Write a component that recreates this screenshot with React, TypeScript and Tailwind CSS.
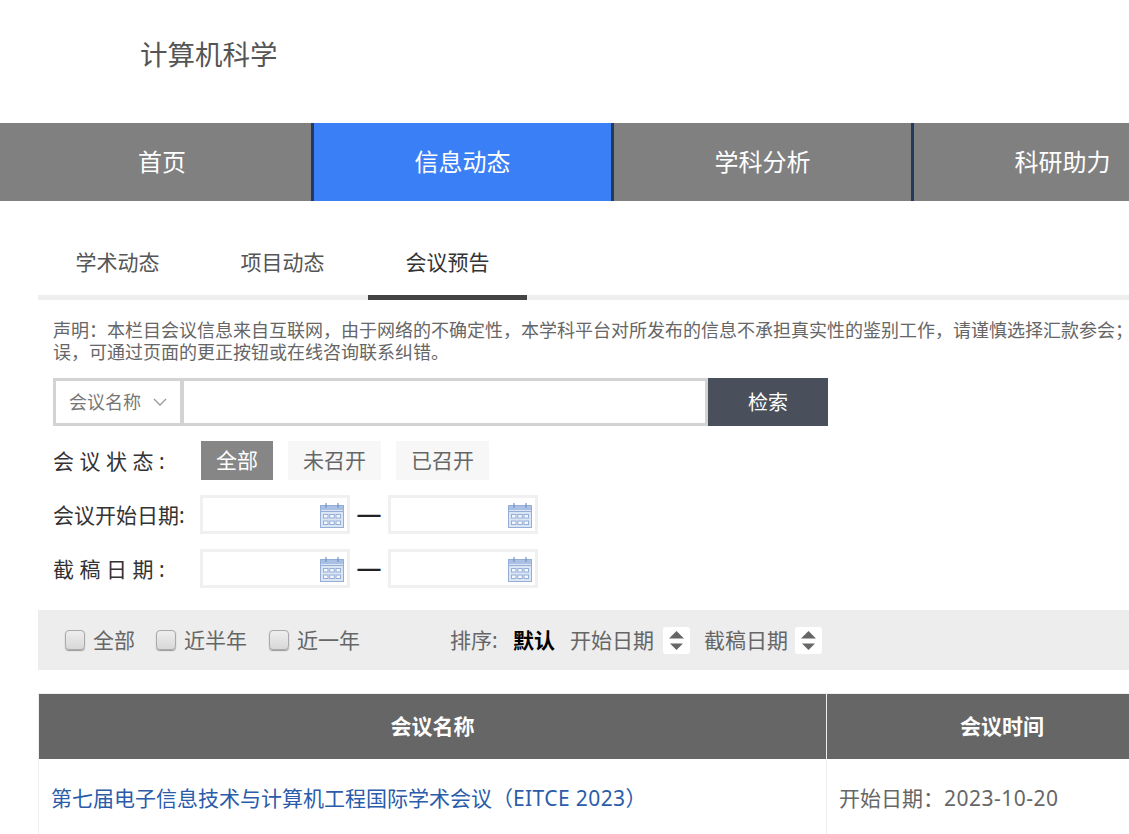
function Cal() {
  return (
    <svg width="24" height="26" viewBox="0 0 24 26" className="shrink-0">
      <rect x="0.5" y="3.5" width="23" height="22" fill="#dbe5f3" stroke="#94aed8" />
      <rect x="1" y="4" width="22" height="4" fill="#a9c0e4" />
      <path d="M6 1v5M18 1v5" stroke="#7392c6" strokeWidth="1.2" />
      <path d="M1 9.5h22" stroke="#94aed8" />
      <g fill="#f4f7fb" stroke="#94aed8" strokeWidth="1">
        <rect x="3.5" y="12.5" width="4.5" height="3.5" />
        <rect x="9.8" y="12.5" width="4.5" height="3.5" />
        <rect x="16" y="12.5" width="4.5" height="3.5" />
        <rect x="3.5" y="19" width="4.5" height="3.5" />
        <rect x="9.8" y="19" width="4.5" height="3.5" />
        <rect x="16" y="19" width="4.5" height="3.5" />
      </g>
    </svg>
  );
}
function DateBox() {
  return (
    <div className="w-[150px] h-[39px] border-[3px] border-[#f0f0f0] bg-white flex items-center justify-end pr-[3px]">
      <Cal />
    </div>
  );
}
function SortBtn() {
  return (
    <span className="w-[27px] h-[27px] bg-white rounded-[3px] flex items-center justify-center">
      <svg width="17" height="21" viewBox="0 0 17 21">
        <path d="M8.5 1L16 8.5H1Z" fill="#666666" />
        <path d="M8.5 20L15 13.5H2Z" fill="#666666" />
      </svg>
    </span>
  );
}
function Check({ label, cls }: { label: string; cls: string }) {
  return (
    <div className={`flex items-center ${cls}`}>
      <span className="w-[20px] h-[20px] rounded-[4px] border border-[#a9a9a9] bg-gradient-to-b from-[#eeeeee] to-[#d8d8d8] shadow-[0_1px_1px_#999]" />
      <span className="ml-[8px] pt-[2px] text-[21px] text-[#666666]">{label}</span>
    </div>
  );
}
function NavItem({ label, active, cls }: { label: string; active?: boolean; cls: string }) {
  return (
    <div className={`h-full flex items-center justify-center text-[24px] text-white shrink-0 ${active ? "bg-[#3b7ff6]" : "bg-[#808080]"} ${cls}`}>
      {label}
    </div>
  );
}
function Dash() {
  return <span className="w-[38px] pb-[2px] text-center text-[25px] font-medium text-[#222222]">—</span>;
}
export default function App() {
  return (
    <div
      className="w-[1129px] h-[834px] overflow-hidden bg-white"
      style={{ fontFamily: '"Noto Sans","Noto Sans CJK SC",sans-serif' }}
    >
      <div className="h-[123px] flex items-center pl-[140px] pb-[14px] text-[27.5px] text-[#555555]">计算机科学</div>
      <div className="h-[78px] flex w-[1300px]">
        <NavItem label="首页" cls="w-[311px] pl-[13px]" />
        <div className="w-[3px] bg-[#223a5e]" />
        <NavItem label="信息动态" active cls="w-[297px]" />
        <div className="w-[3px] bg-[#223a5e]" />
        <NavItem label="学科分析" cls="w-[297px]" />
        <div className="w-[3px] bg-[#223a5e]" />
        <NavItem label="科研助力" cls="w-[297px]" />
      </div>
      <div className="pl-[38px] w-[1300px]">
        <div className="mt-[37px] h-[62px] flex gap-[6px] border-b-[5px] border-[#eeeeee] w-[1262px]">
          {["学术动态", "项目动态", "会议预告"].map((t, i) => (
            <div
              key={t}
              className={`w-[159px] h-[62px] flex items-center justify-center text-[21px] pb-[7px] border-b-[5px] ${i === 2 ? "border-[#444444] text-[#333333]" : "border-transparent text-[#555555]"}`}
            >
              {t}
            </div>
          ))}
        </div>
        <div className="pl-[15px]">
          <p className="mt-[19px] w-[1085px] text-[18px] leading-[22px] text-[#666666]">
            声明：本栏目会议信息来自互联网，由于网络的不确定性，本学科平台对所发布的信息不承担真实性的鉴别工作，请谨慎选择汇款参会；误，可通过页面的更正按钮或在线咨询联系纠错。
          </p>
          <div className="mt-[15px] flex h-[48px]">
            <div className="w-[129px] border-[3px] border-r-2 border-[#d3d3d3] flex items-center pl-[13px] text-[18px] text-[#777777]">
              会议名称
              <svg width="14" height="9" viewBox="0 0 14 9" className="ml-[12px]">
                <path d="M1 1l6 6 6-6" fill="none" stroke="#999999" strokeWidth="1.3" />
              </svg>
            </div>
            <div className="w-[526px] border-y-[3px] border-r-[3px] border-l-2 border-[#d3d3d3]" />
            <div className="w-[120px] pt-[2px] bg-[#4a505b] text-white text-[20px] flex items-center justify-center">检索</div>
          </div>
          <div className="mt-[15px] flex items-center h-[39px]">
            <span className="w-[148px] pt-[2px] text-[21px] tracking-[5.5px] text-[#333333]">会议状态:</span>
            <span className="h-[39px] px-[15px] flex items-center bg-[#868686] text-white text-[21px]">全部</span>
            <span className="ml-[15px] h-[39px] px-[15px] flex items-center bg-[#f7f7f7] text-[#666666] text-[21px]">未召开</span>
            <span className="ml-[15px] h-[39px] px-[15px] flex items-center bg-[#f7f7f7] text-[#666666] text-[21px]">已召开</span>
          </div>
          <div className="mt-[15px] flex items-center h-[39px]">
            <span className="w-[147px] pt-[2px] text-[21px] whitespace-nowrap text-[#333333]">会议开始日期:</span>
            <DateBox />
            <Dash />
            <DateBox />
          </div>
          <div className="mt-[15px] flex items-center h-[39px]">
            <span className="w-[147px] pt-[2px] text-[21px] tracking-[5.5px] text-[#333333]">截稿日期:</span>
            <DateBox />
            <Dash />
            <DateBox />
          </div>
        </div>
        <div className="mt-[22px] h-[60px] bg-[#ededed] flex items-center pl-[27px] w-[1262px]">
          <Check label="全部" cls="w-[91px]" />
          <Check label="近半年" cls="w-[113px]" />
          <Check label="近一年" cls="w-[181px]" />
          <span className="w-[63px] pt-[2px] text-[21px] text-[#666666]">排序:</span>
          <span className="w-[57px] pt-[2px] text-[21px] font-bold text-black">默认</span>
          <span className="w-[93px] pt-[2px] text-[21px] text-[#666666]">开始日期</span>
          <SortBtn />
          <span className="ml-[14px] w-[91px] pt-[2px] text-[21px] text-[#666666]">截稿日期</span>
          <SortBtn />
        </div>
        <div className="mt-[23px] w-[1262px] border-t border-l border-[#eeeeee]">
          <div className="flex h-[65px] bg-[#666666] text-white text-[21px] font-bold">
            <div className="w-[787px] flex items-center justify-center">会议名称</div>
            <div className="w-[351px] border-l border-[#eeeeee] flex items-center justify-center">会议时间</div>
          </div>
          <div className="flex h-[80px] text-[21px]">
            <div className="w-[787px] pl-[12px] flex items-center text-[#2a5caa]">
              <span>第七届电子信息技术与计算机工程国际学术会议（<span className="tracking-[0.4px]">EITCE 2023</span>）</span>
            </div>
            <div className="w-[351px] border-l border-[#eeeeee] pl-[12px] flex items-center text-[#666666]">
              <span>开始日期：<span className="tracking-[0.5px]">2023-10-20</span></span>
            </div>
          </div>
        </div>
      </div>
    </div>
  );
}
